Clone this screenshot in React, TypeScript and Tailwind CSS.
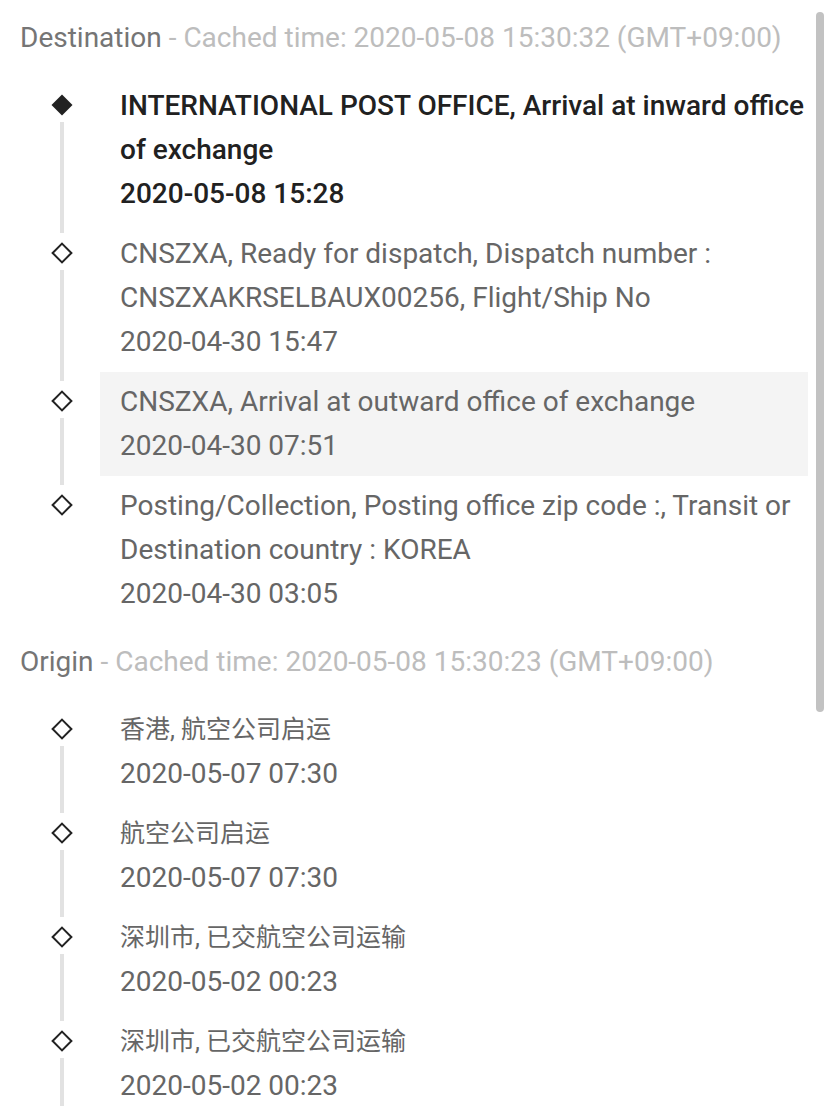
import React from 'react';

type TrackEvent = {
  lines: string[];
  highlight?: boolean;
  cjk?: boolean;
};

type Section = {
  title: string;
  cached: string;
  events: TrackEvent[];
  continues?: boolean;
};

const sections: Section[] = [
  {
    title: 'Destination',
    cached: 'Cached time: 2020-05-08 15:30:32 (GMT+09:00)',
    events: [
      {
        lines: ['INTERNATIONAL POST OFFICE, Arrival at inward office of exchange', '2020-05-08 15:28'],
      },
      {
        lines: ['CNSZXA, Ready for dispatch, Dispatch number : CNSZXAKRSELBAUX00256, Flight/Ship No', '2020-04-30 15:47'],
      },
      {
        lines: ['CNSZXA, Arrival at outward office of exchange', '2020-04-30 07:51'],
        highlight: true,
      },
      {
        lines: ['Posting/Collection, Posting office zip code :, Transit or Destination country : KOREA', '2020-04-30 03:05'],
      },
    ],
  },
  {
    title: 'Origin',
    cached: 'Cached time: 2020-05-08 15:30:23 (GMT+09:00)',
    continues: true,
    events: [
      { lines: ['香港, 航空公司启运', '2020-05-07 07:30'], cjk: true },
      { lines: ['航空公司启运', '2020-05-07 07:30'], cjk: true },
      { lines: ['深圳市, 已交航空公司运输', '2020-05-02 00:23'], cjk: true },
      { lines: ['深圳市, 已交航空公司运输', '2020-05-02 00:23'], cjk: true },
    ],
  },
];

const Diamond: React.FC<{ filled?: boolean }> = ({ filled }) => (
  <svg width="22" height="22" viewBox="0 0 22 22">
    {filled ? (
      <polygon points="11,0.5 21.5,11 11,21.5 0.5,11" fill="#222222" />
    ) : (
      <polygon points="11,1.6 20.4,11 11,20.4 1.6,11" fill="none" stroke="#222222" strokeWidth="2" />
    )}
  </svg>
);

const TimelineItem: React.FC<{ event: TrackEvent; latest: boolean; showLine: boolean }> = ({ event, latest, showLine }) => (
  <li className="flex">
    <div className="w-[100px] shrink-0 flex flex-col pl-[51px] pt-[18px]">
      <div className="w-[22px] h-[22px]">
        <Diamond filled={latest} />
      </div>
      {showLine && <div className="flex-1 w-1 ml-[9px] mt-[6px] -mb-[9px] bg-[#e2e2e2]" />}
    </div>
    <div className={`flex-1 pl-5 py-2 ${event.highlight ? 'bg-[#f4f4f4]' : ''}`}>
      {event.lines.map((line, i) => (
        <p
          key={i}
          className={`${latest ? 'font-medium text-[#212121]' : 'text-[#666666]'} ${event.cjk && i === 0 ? 'text-[25px]' : ''}`}
        >
          {line}
        </p>
      ))}
    </div>
  </li>
);

const App: React.FC = () => {
  return (
    <div
      className="relative min-h-screen bg-white pr-5 text-[28px] leading-[44px]"
      style={{ fontFamily: 'Roboto, "Noto Sans CJK SC", sans-serif' }}
    >
      {sections.map((section, si) => (
        <section key={section.title} className="pt-4">
          <h2 className="pl-5 font-normal">
            <span className="text-[#757575]">{section.title}</span>
            <span className="text-[#bdbdbd]"> - {section.cached}</span>
          </h2>
          <ul className="mt-4">
            {section.events.map((event, i) => (
              <TimelineItem
                key={i}
                event={event}
                latest={si === 0 && i === 0}
                showLine={i < section.events.length - 1 || !!section.continues}
              />
            ))}
          </ul>
        </section>
      ))}

      {/* scrollbar thumb */}
      <div className="absolute right-1 top-3 w-2 h-[700px] rounded-full bg-[#c2c2c2]" />
    </div>
  );
};

export default App;
